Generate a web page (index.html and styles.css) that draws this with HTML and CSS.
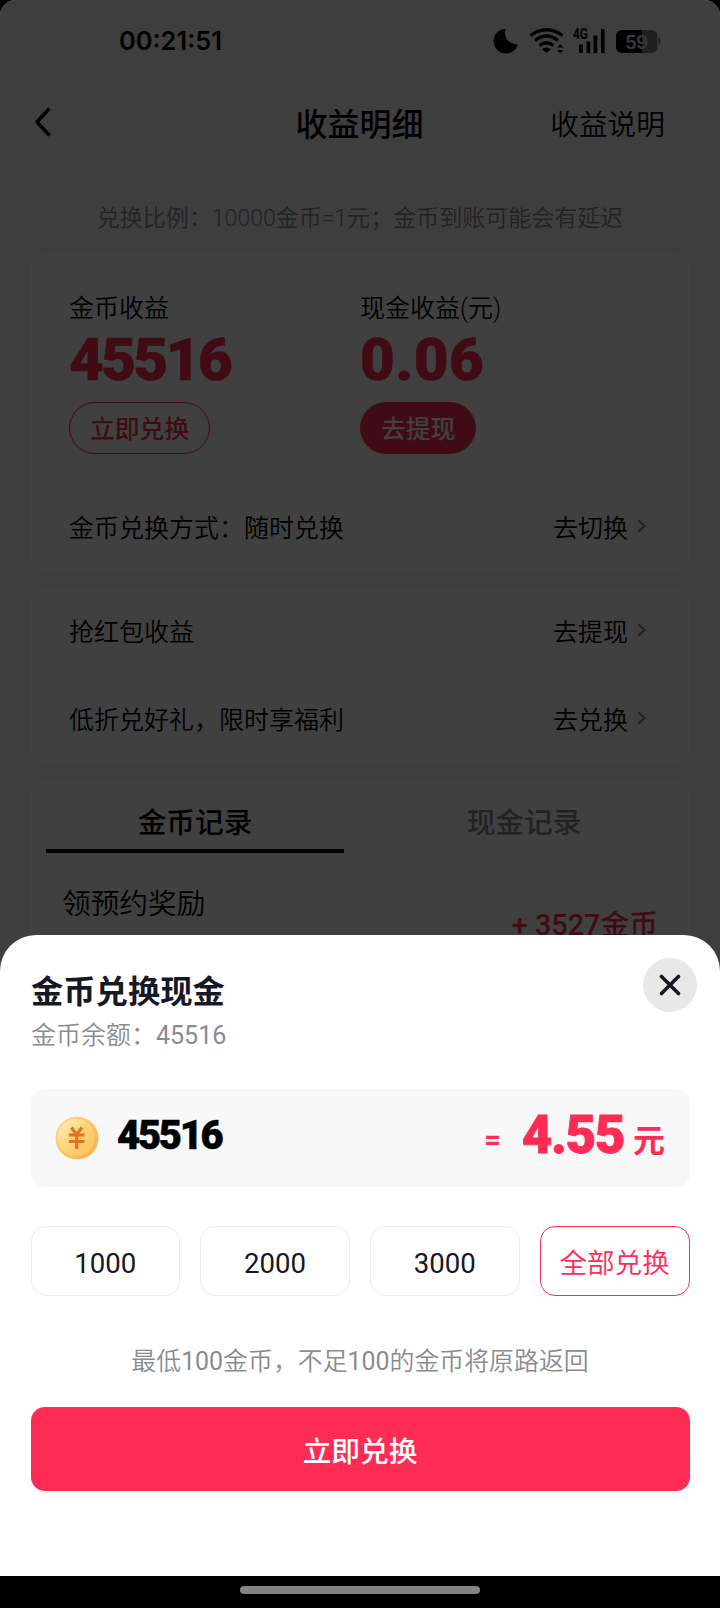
FILE: index.html
```html
<!DOCTYPE html>
<html lang="zh-CN">
<head>
<meta charset="utf-8">
<title>收益明细</title>
<link rel="stylesheet" href="styles.css">
</head>
<body>
<div class="device">
  <div class="page">
    <header class="status">
      <span class="clock">00:21:51</span>
      <svg class="status-icons" width="180" height="36" viewBox="0 0 180 36">
        <path d="M24.500 7.700 A12.400 12.400 0 1 0 37 23 A11.500 11.500 0 0 1 24.500 7.700z"/>
        <g fill="none" stroke="#000" stroke-width="3.200">
          <path d="M49.500 14.500 Q65.500 3 81.500 14.500"/>
          <path d="M54 19.500 Q65.500 10.500 77 19.500"/>
          <path d="M58.500 24.500 Q65.500 19 72.500 24.500"/>
        </g>
        <path d="M61 28 Q65.500 25 70 28 L65.500 32z"/>
        <path d="M76 26.500 L79.200 23 L82.500 26.500z M76 29 L79.200 32.500 L82.500 29z"/>
        <text class="net" x="92" y="18" textLength="15" lengthAdjust="spacingAndGlyphs">4G</text>
        <path d="M98 23.500h4v8.500h-4z M105.500 20.500h3.800v11.500h-3.800z M112.500 14.500h3.800v17.500h-3.800z M120 8h3.600v24H120z"/>
        <rect x="135" y="9" width="41.500" height="23" rx="6" fill="#808080"/>
        <path d="M141 9h20v23h-20a6 6 0 0 1-6-6v-11a6 6 0 0 1 6-6z"/>
        <path d="M177.500 16q2 1 2 4.500t-2 4.500z" fill="#808080"/>
        <text class="battery" x="144" y="27.500">59</text>
      </svg>
    </header>
    <nav class="nav">
      <svg width="20" height="34" viewBox="0 0 20 34"><path d="M16.500 3.500 L4 17 L16.500 30.500" fill="none" stroke="#000" stroke-width="3.500" stroke-linejoin="round"/></svg>
      <h1 class="nav-title">收益明细</h1>
      <span class="nav-link">收益说明</span>
    </nav>
    <p class="notice">兑换比例：10000金币=1元；金币到账可能会有延迟</p>

    <section class="card earnings">
      <div class="balances">
        <div class="balance">
          <span class="label">金币收益</span>
          <strong class="figure">45516</strong>
          <span class="pill">立即兑换</span>
        </div>
        <div class="balance">
          <span class="label">现金收益(元)</span>
          <strong class="figure figure-cash">0.06</strong>
          <span class="pill pill-solid">去提现</span>
        </div>
      </div>
      <div class="row"><span>金币兑换方式：随时兑换</span><span class="go">去切换<svg width="10" height="14" viewBox="0 0 10 14"><path d="M1.500 1.500L7.500 7L1.500 12.500"/></svg></span></div>
    </section>

    <section class="card links">
      <div class="row"><span>抢红包收益</span><span class="go">去提现<svg width="10" height="14" viewBox="0 0 10 14"><path d="M1.500 1.500L7.500 7L1.500 12.500"/></svg></span></div>
      <div class="row"><span>低折兑好礼，限时享福利</span><span class="go">去兑换<svg width="10" height="14" viewBox="0 0 10 14"><path d="M1.500 1.500L7.500 7L1.500 12.500"/></svg></span></div>
    </section>

    <section class="card records">
      <div class="tabs">
        <span class="tab tab-on">金币记录</span>
        <span class="tab">现金记录</span>
      </div>
      <div class="record">
        <span class="record-name">领预约奖励</span>
        <span class="record-sum">+ 3527金币</span>
      </div>
    </section>
  </div>

  <div class="mask"></div>

  <section class="sheet">
    <div class="sheet-head">
      <div>
        <h2 class="sheet-title">金币兑换现金</h2>
        <p class="sheet-sub">金币余额：<span class="num">45516</span></p>
      </div>
      <span class="close"><svg width="22" height="22" viewBox="0 0 22 22"><path d="M2.500 2.500L19.500 19.500M19.500 2.500L2.500 19.500" fill="none" stroke="#161823" stroke-width="3.600" stroke-linecap="round"/></svg></span>
    </div>
    <div class="amount">
      <svg class="coin" width="44" height="44" viewBox="0 0 44 44">
        <defs>
          <linearGradient id="rim" x1="0" y1="0" x2="1" y2="1"><stop offset="0" stop-color="#ffdc8c"/><stop offset="1" stop-color="#f3ad4a"/></linearGradient>
          <linearGradient id="face" x1="0" y1="0" x2="1" y2="1"><stop offset="0" stop-color="#fff0c4"/><stop offset=".45" stop-color="#ffd67e"/><stop offset="1" stop-color="#ffbd55"/></linearGradient>
        </defs>
        <circle cx="22" cy="22" r="21.500" fill="url(#rim)"/>
        <circle cx="21.300" cy="21.300" r="18.500" fill="url(#face)"/>
        <path d="M16.500 11.500L21.500 18.500L27 11.500M14 19H29.500M14 25.500H29.500M21.700 18.500V33" fill="none" stroke="#df741d" stroke-width="3.200"/>
      </svg>
      <span class="coins">45516</span>
      <span class="equals">=</span>
      <span class="cash">4.55</span>
      <span class="unit">元</span>
    </div>
    <div class="chips">
      <span class="chip num">1000</span>
      <span class="chip num">2000</span>
      <span class="chip num">3000</span>
      <span class="chip chip-on">全部兑换</span>
    </div>
    <p class="hint">最低<span class="num">100</span>金币，不足<span class="num">100</span>的金币将原路返回</p>
    <div class="submit">立即兑换</div>
  </section>

  <footer class="home"><span class="home-bar"></span></footer>
</div>
</body>
</html>
```
FILE: styles.css
```css
* { box-sizing: border-box; }
body { margin: 0; background: #000; }
h1, h2, p { margin: 0; font-weight: inherit; }
svg { display: block; flex: none; }

.device {
  position: relative;
  width: 720px;
  height: 1608px;
  overflow: hidden;
  border-radius: 16px;
  background: #000;
  color: #020308;
  font-family: Roboto, "Noto Sans CJK SC", sans-serif;
  font-size: 25px;
  font-weight: 350;
  white-space: nowrap;
}
.num { font-weight: 400; }

.page { height: 1000px; background: #f8f8f8; }
.mask { position: absolute; inset: 0; background: rgba(0, 0, 0, .75); }

.status {
  display: flex;
  align-items: center;
  justify-content: space-between;
  height: 82px;
  padding: 0 59px 0 119px;
}
.clock { font: 600 25.400px/36px Inter, sans-serif; color: #000; }
.status-icons { overflow: visible; margin-top: -4px; }
.net { font: 700 14.500px Roboto, sans-serif; }
.battery { font: 600 19px Inter, sans-serif; letter-spacing: -1px; fill: #ddd; }

.nav {
  display: grid;
  grid-template-columns: 1fr auto 1fr;
  align-items: center;
  height: 80px;
  padding: 0 55px 0 33px;
}
.nav-title { font-size: 32px; font-weight: 500; padding-left: 21px; }
.nav-link { justify-self: end; font-size: 28.700px; }
.notice {
  height: 91px;
  padding-top: 39px;
  font-size: 23px;
  line-height: 36px;
  text-align: center;
  color: #86878d;
}

.card {
  margin: 0 30px 16px;
  padding: 0 39px;
  border-radius: 16px;
  background: #fff;
}
.earnings { height: 318px; padding-top: 38px; }
.balances { display: grid; grid-template-columns: 291px 1fr; height: 191px; }
.balance { display: flex; flex-direction: column; align-items: flex-start; }
.label { line-height: 36px; }
.figure {
  height: 57px;
  font-size: 60px;
  font-weight: 900;
  line-height: 65px;
  letter-spacing: -2.500px;
  color: #fe2c55;
  -webkit-text-stroke: .6px currentColor;
}
.figure-cash { letter-spacing: .4px; }
.pill {
  height: 52px;
  margin-top: 18px;
  padding: 0 20px;
  border: 1.500px solid #fe2c55;
  border-radius: 26px;
  font-size: 24.800px;
  line-height: 53px;
  font-weight: 500;
  color: #fe2c55;
}
.pill-solid { background: #fe2c55; color: #fff; }
.row {
  display: flex;
  align-items: center;
  justify-content: space-between;
  height: 88px;
}
.go { display: flex; align-items: center; gap: 9px; padding-right: 4px; }
.go svg { fill: none; stroke: #86878d; stroke-width: 2.200; }
.links { height: 176px; margin-bottom: 17px; }
.links .row { padding-bottom: 3px; }
.records { height: 300px; padding: 0 16px; }
.tabs { display: grid; grid-template-columns: 298px 298px; gap: 31px; height: 73px; }
.tab {
  padding-top: 17px;
  border-bottom: 4px solid transparent;
  font-size: 28.700px;
  font-weight: 500;
  line-height: 52px;
  text-align: center;
  color: #86878d;
}
.tab-on { color: #000; border-color: #000; }
.record { display: flex; justify-content: space-between; padding: 31px 16px 0 16px; }
.record-name { font-size: 28.700px; line-height: 40px; }
.record-sum {
  margin-top: 21px;
  font-size: 28.800px;
  font-weight: 500;
  line-height: 40px;
  color: #fe2c55;
}

.sheet {
  position: absolute;
  top: 935px;
  left: 0;
  width: 720px;
  height: 641px;
  padding: 23px 30.500px 0;
  border-radius: 36px 36px 0 0;
  background: #fff;
}
.sheet-head {
  display: flex;
  justify-content: space-between;
  height: 131px;
  margin-right: -7.500px;
}
.sheet-title { padding: 12px 0 0 .5px; font-size: 32.300px; font-weight: 700; line-height: 44px; color: #161823; }
.sheet-sub { margin-top: 4px; padding-left: .5px; line-height: 36px; color: #8a8b91; }
.close {
  display: grid;
  place-items: center;
  width: 54px;
  height: 54px;
  border-radius: 50%;
  background: #e8e8e9;
}
.amount {
  display: flex;
  align-items: center;
  height: 98px;
  padding: 0 24.500px;
  border-radius: 14px;
  background: #f8f8f8;
  color: #fe2c55;
}
.coins { margin: -4px 0 0 18px; font-size: 40px; font-weight: 900; letter-spacing: -2.300px; line-height: 60px; color: #000; -webkit-text-stroke: .5px currentColor; }
.equals { margin: 3px 21px 0 auto; font-size: 29px; font-weight: 700; }
.cash { font-size: 53px; font-weight: 900; letter-spacing: -1.500px; line-height: 60px; margin-top: -6px; -webkit-text-stroke: .8px currentColor; }
.unit { margin: 0 0 0 9px; font-size: 32px; font-weight: 700; }
.chips { display: grid; grid-template-columns: repeat(4, 1fr); gap: 20px; margin-top: 39px; }
.chip {
  height: 70px;
  border: 1.500px solid #ececed;
  border-radius: 15px;
  font-size: 27.600px;
  line-height: 74px;
  text-align: center;
  color: #161823;
}
.chip-on { border-color: #fe2c55; color: #fe2c55; }
.hint { margin-top: 48px; font-size: 24.900px; line-height: 36px; text-align: center; color: #8a8b91; }
.submit {
  height: 84px;
  margin-top: 27px;
  border-radius: 14px;
  background: #fe2c55;
  color: #fff;
  font-size: 28.700px;
  font-weight: 500;
  line-height: 90px;
  text-align: center;
}

.home {
  position: absolute;
  inset: 1576px 0 0;
  display: flex;
  justify-content: center;
  padding-top: 10px;
  background: #000;
}
.home-bar { width: 240px; height: 8px; border-radius: 4px; background: #838383; }
```
